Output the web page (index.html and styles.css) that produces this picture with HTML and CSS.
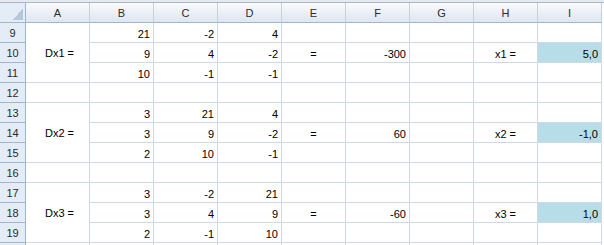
FILE: index.html
```html
<!DOCTYPE html>
<html>
<head>
<meta charset="utf-8">
<link rel="stylesheet" href="styles.css">
</head>
<body>
<div class="band"></div>
<div class="sheet">
  <div class="corner"><span class="tri"></span></div>
  <div class="colhead">A</div><div class="colhead">B</div><div class="colhead">C</div><div class="colhead">D</div><div class="colhead">E</div><div class="colhead">F</div><div class="colhead">G</div><div class="colhead">H</div><div class="colhead">I</div>

  <div class="rowhead">9</div><div class="cell lbl span3">Dx1 =</div><div class="cell num">21</div><div class="cell num">-2</div><div class="cell num">4</div><div class="cell"></div><div class="cell"></div><div class="cell"></div><div class="cell"></div><div class="cell"></div>
  <div class="rowhead">10</div><div class="cell num">9</div><div class="cell num">4</div><div class="cell num">-2</div><div class="cell ctr">=</div><div class="cell num">-300</div><div class="cell"></div><div class="cell ctr">x1 =</div><div class="cell num hl">5,0</div>
  <div class="rowhead">11</div><div class="cell num">10</div><div class="cell num">-1</div><div class="cell num">-1</div><div class="cell"></div><div class="cell"></div><div class="cell"></div><div class="cell"></div><div class="cell"></div>
  <div class="rowhead">12</div><div class="cell"></div><div class="cell"></div><div class="cell"></div><div class="cell"></div><div class="cell"></div><div class="cell"></div><div class="cell"></div><div class="cell"></div><div class="cell"></div>

  <div class="rowhead">13</div><div class="cell lbl span3">Dx2 =</div><div class="cell num">3</div><div class="cell num">21</div><div class="cell num">4</div><div class="cell"></div><div class="cell"></div><div class="cell"></div><div class="cell"></div><div class="cell"></div>
  <div class="rowhead">14</div><div class="cell num">3</div><div class="cell num">9</div><div class="cell num">-2</div><div class="cell ctr">=</div><div class="cell num">60</div><div class="cell"></div><div class="cell ctr">x2 =</div><div class="cell num hl">-1,0</div>
  <div class="rowhead">15</div><div class="cell num">2</div><div class="cell num">10</div><div class="cell num">-1</div><div class="cell"></div><div class="cell"></div><div class="cell"></div><div class="cell"></div><div class="cell"></div>
  <div class="rowhead">16</div><div class="cell"></div><div class="cell"></div><div class="cell"></div><div class="cell"></div><div class="cell"></div><div class="cell"></div><div class="cell"></div><div class="cell"></div><div class="cell"></div>

  <div class="rowhead">17</div><div class="cell lbl span3">Dx3 =</div><div class="cell num">3</div><div class="cell num">-2</div><div class="cell num">21</div><div class="cell"></div><div class="cell"></div><div class="cell"></div><div class="cell"></div><div class="cell"></div>
  <div class="rowhead">18</div><div class="cell num">3</div><div class="cell num">4</div><div class="cell num">9</div><div class="cell ctr">=</div><div class="cell num">-60</div><div class="cell"></div><div class="cell ctr">x3 =</div><div class="cell num hl">1,0</div>
  <div class="rowhead">19</div><div class="cell num">2</div><div class="cell num">-1</div><div class="cell num">10</div><div class="cell"></div><div class="cell"></div><div class="cell"></div><div class="cell"></div><div class="cell"></div>
  <div class="rowhead"></div><div class="cell"></div><div class="cell"></div><div class="cell"></div><div class="cell"></div><div class="cell"></div><div class="cell"></div><div class="cell"></div><div class="cell"></div><div class="cell"></div>
</div>
</body>
</html>
```
FILE: styles.css
```css
html, body {
  margin: 0;
  padding: 0;
  background: #ffffff;
  overflow: hidden;
  width: 604px;
  height: 245px;
}
body {
  font-family: "Liberation Sans", Arial, sans-serif;
  font-size: 11px;
  color: #000;
}
.band {
  height: 2px;
  background: #e6eaf0;
  border-bottom: 1px solid #a9b8c9;
}
.sheet {
  display: grid;
  grid-template-columns: 26px repeat(9, 64px);
  grid-auto-rows: 20px;
}
.sheet > div {
  box-sizing: border-box;
}
.corner {
  background: #e4ecf7;
  border-right: 1px solid #9eb6ce;
  border-bottom: 1px solid #9eb6ce;
  display: flex;
  justify-content: flex-end;
  align-items: flex-end;
  padding: 0 2px 2px 0;
}
.tri {
  width: 10px;
  height: 12px;
  background: linear-gradient(to bottom right, transparent 50%, #b7c6d8 50%);
}
.colhead {
  background: linear-gradient(#f9fbfd, #eaeff6 55%, #dfe6f0);
  border-right: 1px solid #c5d1df;
  border-bottom: 1px solid #9eb6ce;
  display: flex;
  align-items: center;
  justify-content: center;
  color: #2b2b2b;
  font-size: 11px;
  padding-top: 1px;
}
.rowhead {
  background: #e4ecf7;
  border-right: 1px solid #9eb6ce;
  border-bottom: 1px solid #9eb6ce;
  display: flex;
  align-items: center;
  justify-content: center;
  color: #2b2b2b;
  font-size: 11px;
  padding-top: 1px;
}
.cell {
  border-right: 1px solid #d0d7e5;
  border-bottom: 1px solid #d0d7e5;
  display: flex;
  align-items: flex-end;
  line-height: 13px;
  padding: 0 3px 1px 3px;
  white-space: nowrap;
}
.num {
  justify-content: flex-end;
}
.ctr {
  justify-content: center;
}
.lbl {
  justify-content: center;
  align-items: center;
  padding: 2px 0 0 4px;
}
.span3 {
  grid-row: span 3;
}
.hl {
  background: #b7dde8;
}
```
